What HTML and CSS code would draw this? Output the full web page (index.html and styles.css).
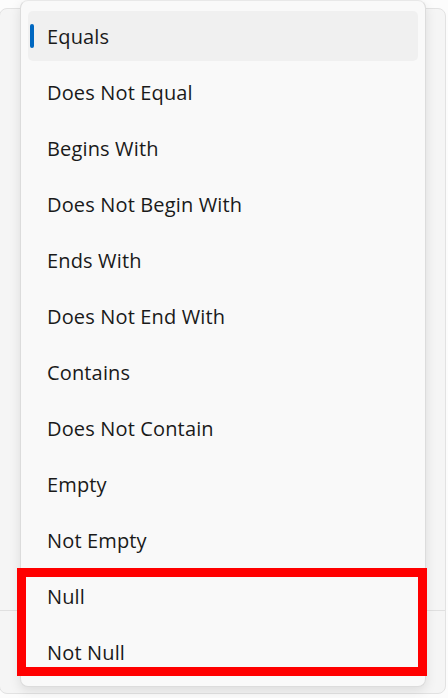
FILE: index.html
```html
<!DOCTYPE html>
<html>
	<head>
		<meta charset="utf-8">
		<title>Filter</title>
		<link rel="stylesheet" href="styles.css">
	</head>
	<body>
		<!-- 背后的面板 -->
		<div class="panel">
			<div class="panel-body"></div>
			<div class="panel-foot"></div>
		</div>

		<!-- 弹出菜单 -->
		<div class="menu">
			<ul class="menu-list">
				<li class="item selected">Equals</li>
				<li class="item">Does Not Equal</li>
				<li class="item">Begins With</li>
				<li class="item">Does Not Begin With</li>
				<li class="item">Ends With</li>
				<li class="item">Does Not End With</li>
				<li class="item">Contains</li>
				<li class="item">Does Not Contain</li>
				<li class="item">Empty</li>
				<li class="item">Not Empty</li>
				<li class="item">Null</li>
				<li class="item">Not Null</li>
			</ul>
		</div>

		<!-- 红框标注 -->
		<div class="mark"></div>
	</body>
</html>
```

FILE: styles.css
```css
*{
	margin: 0;
	padding: 0;
	box-sizing: border-box;
}

body{
	width: 448px;
	height: 698px;
	background-color: #fcfcfc;
	font-family: "Open Sans", "Noto Sans", sans-serif;
	position: relative;
	overflow: hidden;
}

/* 背后的面板 */
.panel{
	margin: 8px 0 0 -1px;
	width: 447px;
	height: 686px;
	background-color: #f5f5f5;
	border: 1px solid #e2e2e2;
	border-radius: 8px;
	display: flex;
	flex-direction: column;
}

.panel-body{
	height: 602px;
	border-bottom: 1px solid #e0e0e0;
}

/* 弹出菜单 */
.menu{
	position: absolute;
	left: 20px;
	top: 0;
	width: 406px;
	height: 687px;
	background-color: #f9f9f9;
	border: 1px solid #dcdcdc;
	border-top-color: #e8e8e8;
	border-radius: 8px;
	box-shadow: 0 4px 12px rgba(0, 0, 0, 0.10);
	padding: 10px 7px;
}

.menu-list{
	list-style: none;
	display: flex;
	flex-direction: column;
	gap: 6px;
}

.item{
	position: relative;
	height: 50px;
	padding-left: 19px;
	border-radius: 5px;
	display: flex;
	align-items: center;
	font-size: 20px;
	font-weight: 370;
	letter-spacing: 0.15px;
	color: #1a1a1a;
}

.selected{
	background-color: #f0f0f0;
}

/* 选中条 */
.selected::before{
	content: "";
	position: absolute;
	left: 2px;
	top: 13px;
	width: 4px;
	height: 24px;
	border-radius: 2px;
	background-color: #0067c0;
}

/* 红框 */
.mark{
	position: absolute;
	left: 17px;
	top: 568px;
	width: 410px;
	height: 108px;
	border: 9px solid #ff0000;
}
```
